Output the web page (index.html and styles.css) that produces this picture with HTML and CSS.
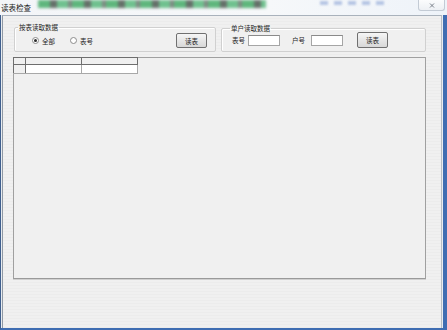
FILE: index.html
```html
<!DOCTYPE html>
<html lang="zh-CN">
<head>
    <meta charset="UTF-8">
    <meta name="viewport" content="width=device-width, initial-scale=1.0">
    <title>读表检查</title>
    <link rel="stylesheet" href="styles.css">
</head>
<body>
    <div class="window">
        <div class="titlebar">
            <span class="title">读表检查</span>
            <div class="blur-band"></div>
            <div class="blur-band blur-band-right"></div>
            <button class="close-btn" aria-label="关闭">
                <svg width="6" height="5" viewBox="0 0 6 5">
                    <path d="M1 0.5 L5 4.5 M5 0.5 L1 4.5" stroke="#7a808a" stroke-width="1" fill="none"/>
                </svg>
            </button>
        </div>

        <div class="frame">
            <div class="client">
                <div class="groups">
                    <fieldset class="group group-all">
                        <legend>按表读取数据</legend>
                        <div class="group-row">
                            <label class="option">
                                <span class="radio checked"></span>全部
                            </label>
                            <label class="option">
                                <span class="radio"></span>表号
                            </label>
                            <button class="btn">读表</button>
                        </div>
                    </fieldset>

                    <fieldset class="group group-single">
                        <legend>单户读取数据</legend>
                        <div class="group-row">
                            <span class="field-label">表号</span>
                            <input type="text" class="field">
                            <span class="field-label field-label-second">户号</span>
                            <input type="text" class="field">
                            <button class="btn btn-single">读表</button>
                        </div>
                    </fieldset>
                </div>

                <div class="grid-panel">
                    <table class="grid">
                        <tr class="grid-head">
                            <td class="rowhead"></td>
                            <td></td>
                            <td></td>
                        </tr>
                        <tr class="grid-row">
                            <td class="rowhead"></td>
                            <td></td>
                            <td></td>
                        </tr>
                    </table>
                </div>
            </div>
        </div>
    </div>
</body>
</html>
```

FILE: styles.css
```css
body {
    margin: 0;
    font-family: "Noto Sans CJK SC", "Liberation Sans", sans-serif;
    background: #ffffff;
}

.window {
    width: 447px;
    height: 330px;
    display: flex;
    flex-direction: column;
    overflow: hidden;
}

/* Title bar */
.titlebar {
    height: 15px;
    position: relative;
    display: flex;
    justify-content: space-between;
    align-items: flex-start;
    background: linear-gradient(to right, #f3f5f8, #f6f8fa 60%, #eef3f9);
}

.title {
    position: relative;
    z-index: 2;
    margin: 3px 0 0 1px;
    font-size: 7.5px;
    line-height: 9px;
    color: #1e1e1e;
}

.blur-band {
    position: absolute;
    left: 38px;
    top: 0;
    width: 228px;
    height: 8px;
    background: repeating-linear-gradient(90deg, #4fb070 0 12px, #56625a 12px 19px, #62bc84 19px 30px, #747f78 30px 34px);
    filter: blur(1.6px);
    opacity: 0.9;
}

.blur-band-right {
    left: 320px;
    top: 1px;
    width: 66px;
    height: 4px;
    background: repeating-linear-gradient(90deg, #8ea6d6 0 8px, transparent 8px 14px);
    filter: blur(1px);
    opacity: 0.6;
}

.close-btn {
    position: relative;
    z-index: 2;
    width: 27px;
    height: 11px;
    margin-right: 2px;
    padding: 0;
    border: 1px solid #c3cbd5;
    border-top: none;
    border-radius: 0 0 3px 3px;
    background: linear-gradient(#fbfcfd, #edf0f4);
    display: flex;
    align-items: center;
    justify-content: center;
}

/* Window frame */
.frame {
    flex: 1;
    display: flex;
    border-left: 1px solid #3f5f8e;
    border-right: 4px solid #3f6db2;
    border-bottom: 2px solid #3f6db2;
    padding: 0 1px 0 1px;
    background: #e8ecf0;
}

.client {
    flex: 1;
    border-left: 1px solid #8e98a4;
    border-top: 1px solid #a9b2bc;
    border-right: 1px solid #b8bec6;
    padding: 8px 0 0 11px;
    background: repeating-linear-gradient(#f0f0f0 0 2px, #ececec 2px 3px);
}

/* Group boxes */
.groups {
    display: flex;
    align-items: flex-start;
    gap: 5px;
}

.group {
    margin: 0;
    min-inline-size: 0;
    border: 1px solid #d0d0d0;
    box-shadow: inset 1px 1px 0 #ffffff;
    border-radius: 2px;
    background: #f0f0f0;
}

.group legend {
    padding: 0 1px;
    font-size: 6.5px;
    line-height: 7px;
    color: #1e1e1e;
}

.group-all {
    width: 202px;
    box-sizing: border-box;
    padding: 2px 8px 3px 17px;
}

.group-all legend {
    margin-left: -14px;
}

.group-single {
    width: 205px;
    box-sizing: border-box;
    margin-top: 1px;
    padding: 0 35px 3px 10px;
}

.group-single legend {
    margin-left: -2px;
}

.group-row {
    display: flex;
    align-items: center;
    font-size: 6.5px;
    color: #1e1e1e;
}

.option {
    width: 38px;
    display: flex;
    align-items: center;
    gap: 3px;
}

.radio {
    width: 5px;
    height: 5px;
    border: 1px solid #8c8c8c;
    border-radius: 50%;
    background: #ffffff;
    display: flex;
    align-items: center;
    justify-content: center;
}

.radio.checked::after {
    content: "";
    width: 3px;
    height: 3px;
    border-radius: 50%;
    background: #2a2a2a;
}

.btn {
    width: 31px;
    height: 15px;
    margin-left: auto;
    padding: 0;
    border: 1px solid #707070;
    border-radius: 2px;
    background: linear-gradient(#f6f6f6, #e6e6e6 50%, #d8d8d8);
    font-family: inherit;
    font-size: 6.5px;
    color: #1e1e1e;
}

.btn-single {
    height: 16px;
    margin-left: 14px;
}

.field-label {
    margin-right: 3px;
}

.field-label-second {
    margin-left: 12px;
    margin-right: 6px;
}

.field {
    width: 32px;
    height: 11px;
    box-sizing: border-box;
    padding: 0;
    border: 1px solid #a5a5a5;
    border-top-color: #8a8a8a;
    background: #ffffff;
}

/* Data grid */
.grid-panel {
    width: 413px;
    height: 222px;
    box-sizing: border-box;
    margin: 5px 0 0 -1px;
    border: 1px solid #a0a0a0;
    border-bottom-color: #9a9a9a;
    box-shadow: 0 1px 0 #d0d0d0;
    background: #f0f0f0;
}

.grid {
    border-collapse: collapse;
    margin: -1px 0 0 -1px;
}

.grid td {
    padding: 0;
    width: 55px;
    border: 1px solid #6e6e6e;
}

.grid td.rowhead {
    width: 11px;
    background: #f0f0f0;
}

.grid-head td {
    height: 6px;
    background: #f0f0f0;
}

.grid-row td {
    height: 8px;
    background: #ffffff;
    border-color: #a8a8a8;
    border-top-color: #6e6e6e;
}

.grid-row td.rowhead {
    border-right-color: #6e6e6e;
    border-left-color: #6e6e6e;
}
```
